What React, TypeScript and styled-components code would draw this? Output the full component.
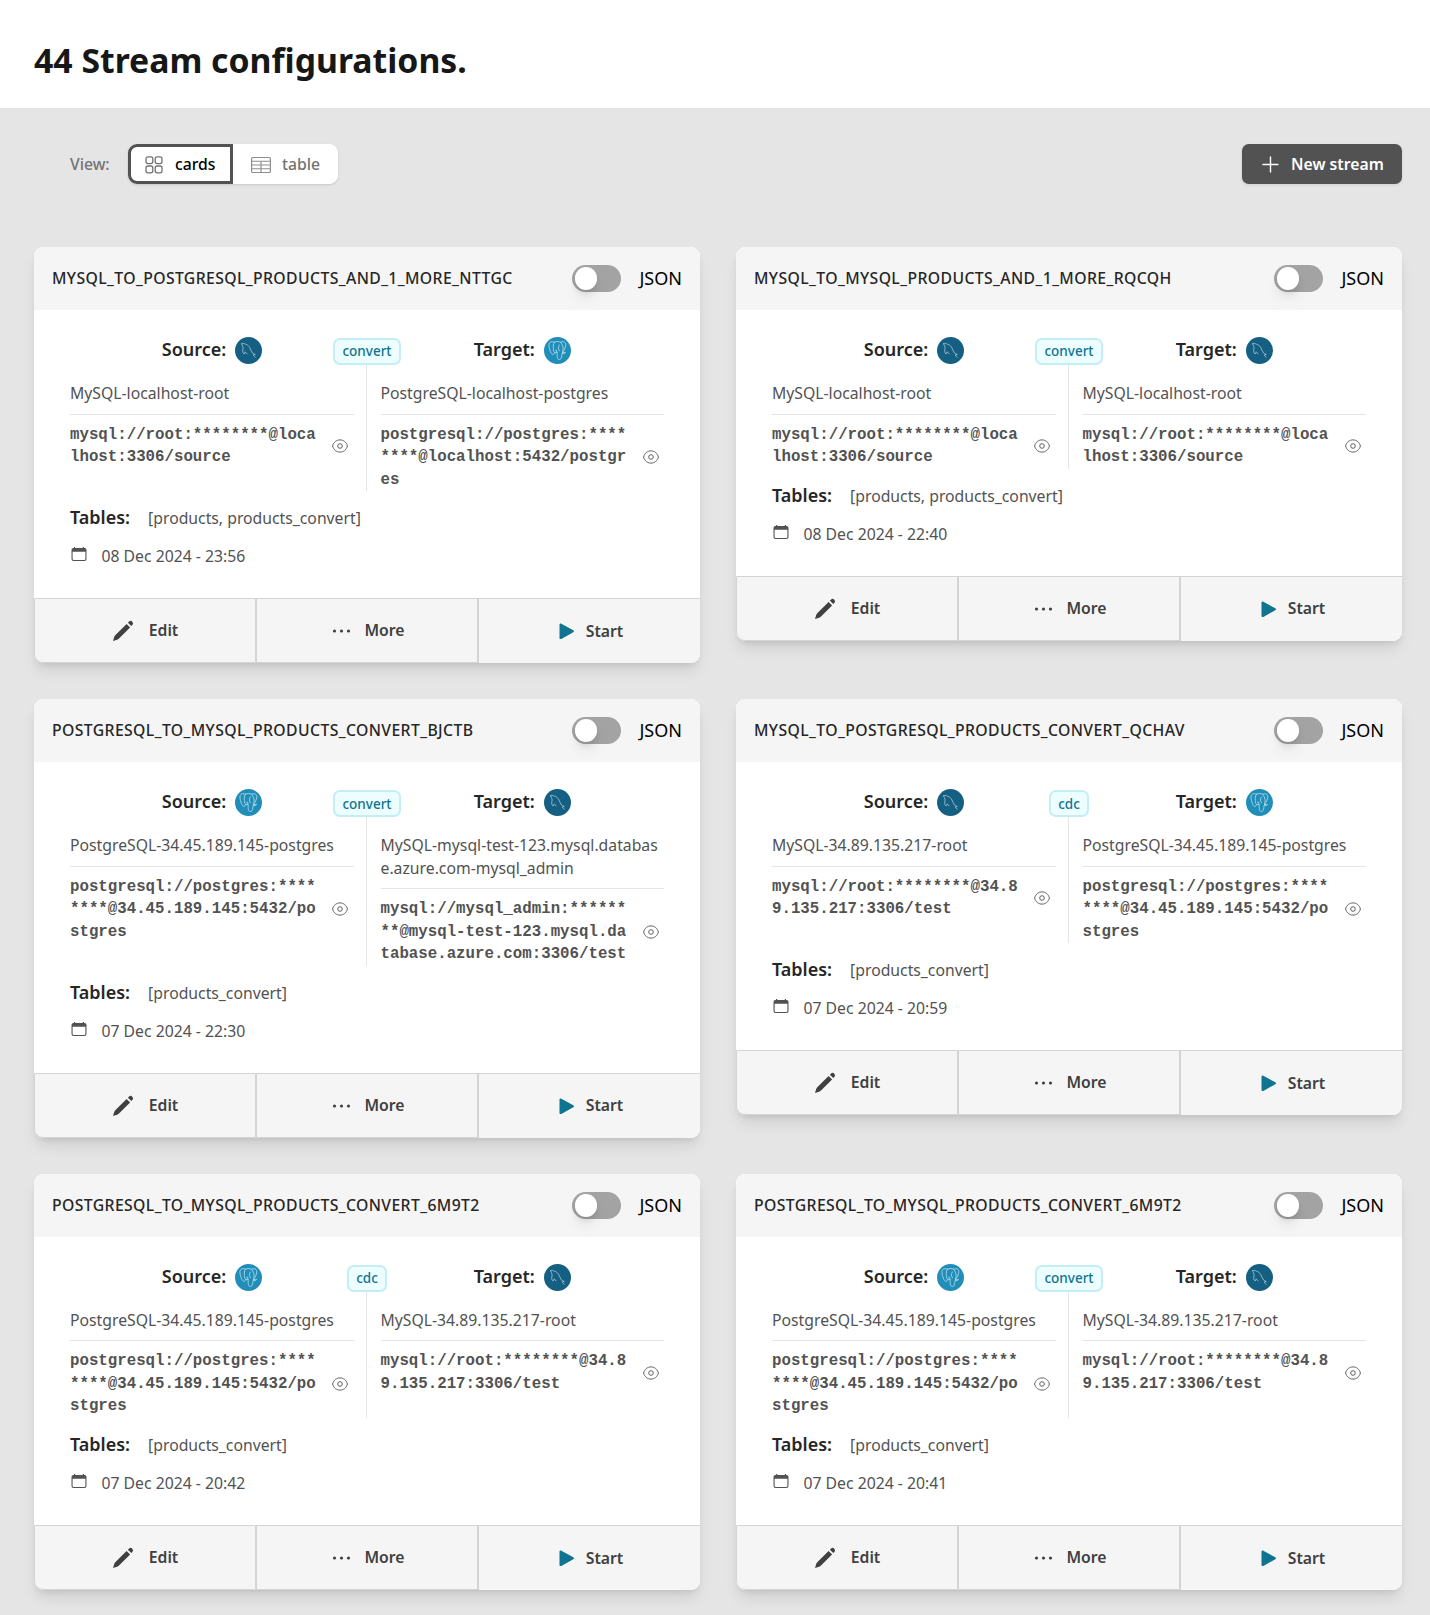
import React, { useState } from "react";
import styled, { createGlobalStyle, css } from "styled-components";

const Global = createGlobalStyle`
  *, *::before, *::after { box-sizing: border-box; }
  html { font-size: 18px; }
  body {
    margin: 0;
    background: #e5e5e5;
    color: #000;
    font-family: "Noto Sans", "Open Sans", sans-serif;
    line-height: 1.5;
  }
  button { font: inherit; color: inherit; cursor: pointer; margin: 0; }
  svg { display: block; flex: none; }
`;

const Page = styled.main`
  height: 1615px;
  overflow: hidden;
`;

const PageHeader = styled.header`
  display: flex;
  align-items: center;
  height: 108px;
  padding: 13px 34px 0;
  background: #fff;
`;

const Title = styled.h1`
  margin: 0;
  font-size: 33.75px;
  line-height: 40.5px;
  font-weight: 700;
  color: #171717;
`;

const Toolbar = styled.section`
  display: flex;
  align-items: center;
  justify-content: space-between;
  padding: 36px 28px 0 70px;
`;

const ViewPicker = styled.div`
  display: flex;
  align-items: center;
  gap: 18px;
  font-size: 15.75px;
  color: #737373;
`;

const ViewLabel = styled.span`
  width: 40px;
  padding-top: 2px;
  font-weight: 500;
`;

const Segments = styled.div`
  display: flex;
  height: 40px;
  border-radius: 9px;
  background: #fff;
  box-shadow: 0 1px 3px rgba(0, 0, 0, 0.1), 0 1px 2px -1px rgba(0, 0, 0, 0.1);
`;

const Segment = styled.button<{ $active?: boolean }>`
  display: flex;
  align-items: center;
  width: 105px;
  padding: 1px 0 0 ${(p) => (p.$active ? 11 : 13)}px;
  background: #fff;
  border: 3px solid ${(p) => (p.$active ? "#525252" : "#fff")};
  border-radius: 0 9px 9px 0;
  font-size: 15.75px;
  font-weight: 500;
  color: ${(p) => (p.$active ? "#000" : "#737373")};
  &:first-child { border-radius: 9px 0 0 9px; }
  svg { color: ${(p) => (p.$active ? "#737373" : "#8f8f8f")}; }
`;

const SegmentLabel = styled.span`
  margin-left: 9px;
`;

const PrimaryButton = styled.button`
  display: flex;
  align-items: center;
  gap: 9px;
  height: 40px;
  width: 160px;
  padding: 1px 0 0 17px;
  border: 0;
  border-radius: 6.75px;
  background: #525252;
  color: #fff;
  font-size: 15.75px;
  font-weight: 600;
  box-shadow: 0 1px 3px rgba(0, 0, 0, 0.1);
`;

const Grid = styled.section`
  display: grid;
  grid-template-columns: 1fr 1fr;
  align-items: start;
  gap: 36px;
  padding: 63px 28px 36px 34px;
`;

const CardBox = styled.article`
  border-radius: 9px;
  background: #fff;
  box-shadow: 0 10px 15px -3px rgba(0, 0, 0, 0.1), 0 4px 6px -3px rgba(0, 0, 0, 0.1);
`;

const CardHeader = styled.header`
  display: flex;
  align-items: center;
  justify-content: space-between;
  height: 63px;
  padding: 0 18px;
  border-radius: 9px 9px 0 0;
  background: #f5f5f5;
`;

const CardTitle = styled.h2`
  margin: 0;
  font-size: 15.75px;
  line-height: 22.5px;
  font-weight: 500;
  letter-spacing: 0.39px;
  color: #262626;
`;

const ToggleLabel = styled.label`
  display: flex;
  align-items: center;
  gap: 18px;
  font-size: 18px;
  line-height: 27px;
`;

const Track = styled.button<{ $on: boolean }>`
  display: flex;
  justify-content: ${(p) => (p.$on ? "flex-end" : "flex-start")};
  align-items: center;
  width: 49.5px;
  height: 27px;
  padding: 0 3px;
  border: 0;
  border-radius: 14px;
  background: ${(p) => (p.$on ? "#0e7490" : "#a3a3a3")};
`;

const Knob = styled.span`
  width: 22.5px;
  height: 22.5px;
  border-radius: 50%;
  background: #fff;
  box-shadow: 0 4px 6px -1px rgba(0, 0, 0, 0.1), 0 10px 15px -3px rgba(0, 0, 0, 0.1);
`;

const CardBody = styled.div`
  padding: 27px 36px 0;
`;

const Endpoints = styled.div`
  position: relative;
  display: grid;
  grid-template-columns: 1fr 1fr;
`;

const Endpoint = styled.section<{ $side: "left" | "right" }>`
  ${(p) =>
    p.$side === "left"
      ? css`padding-right: 12px; border-right: 1px solid #e5e5e5;`
      : css`padding-left: 13.5px;`}
`;

const EndpointHead = styled.h3`
  display: flex;
  align-items: center;
  justify-content: center;
  gap: 9px;
  height: 27px;
  margin: 0 0 18px;
  font-size: 18px;
  line-height: 27px;
  font-weight: 600;
  color: #262626;
`;

const EndpointLabel = styled.span`
  padding-bottom: 1.5px;
`;

const ModeSlot = styled.div`
  position: absolute;
  top: -1px;
  left: 0;
  right: 0;
  display: flex;
  justify-content: center;
  height: 29px;
`;

const ModeBacking = styled.div`
  padding-top: 2px;
  background: #fff;
`;

const ModeBadge = styled.span`
  display: flex;
  align-items: center;
  height: 27px;
  padding: 0 7px;
  border: 2px solid #c5eef4;
  border-radius: 6.75px;
  background: #ecfeff;
  font-size: 13.5px;
  font-weight: 500;
  color: #0e7490;
`;

const ConnectionName = styled.p`
  margin: 0 0 9px;
  padding-bottom: 9px;
  border-bottom: 1px solid #e5e5e5;
  font-size: 15.75px;
  line-height: 22.5px;
  color: #525252;
  word-break: break-all;
`;

const UrlRow = styled.div`
  display: flex;
  align-items: center;
`;

const Url = styled.code`
  width: 248px;
  font-family: "Liberation Mono", monospace;
  font-size: 15.75px;
  line-height: 22.5px;
  font-weight: 700;
  color: #525252;
  word-break: break-all;
`;

const RevealButton = styled.button`
  padding: 0;
  margin-left: 14px;
  border: 0;
  background: none;
  color: #606060;
`;

const TablesRow = styled.div`
  display: flex;
  align-items: baseline;
  gap: 18px;
  height: 27px;
  margin-top: 13.125px;
  font-size: 15.75px;
  line-height: 27px;
  color: #525252;
`;

const TablesLabel = styled.strong`
  font-size: 18px;
  font-weight: 600;
  color: #262626;
`;

const DateRow = styled.div`
  display: flex;
  gap: 13.5px;
  margin-top: 14px;
  height: 53px;
  font-size: 15.75px;
  line-height: 22.5px;
  color: #525252;
`;

const Actions = styled.footer`
  display: grid;
  grid-template-columns: repeat(3, 1fr);
`;

const Action = styled.button<{ $last?: boolean; $gap: number; $shift?: number }>`
  display: flex;
  align-items: center;
  justify-content: center;
  gap: ${(p) => p.$gap}px;
  height: 65px;
  padding: 1px 0 0 ${(p) => p.$shift ?? 0}px;
  border: solid #d4d4d4;
  border-width: ${(p) => (p.$last ? "1px 0 0 1px" : "1px")};
  background: #f5f5f5;
  font-size: 15.75px;
  font-weight: 600;
  color: #404040;
  &:first-child { border-bottom-left-radius: 9px; }
  &:last-child { border-bottom-right-radius: 9px; }
`;

type Db = "mysql" | "postgres";

const MySqlIcon = () => (
  <svg width="27" height="27" viewBox="0 0 27 27" fill="none">
    <circle cx="13.5" cy="13.5" r="13.5" fill="#156082" />
    <path
      d="M6.600 6.700c1.200-.9 2.400-.1 3.600.4 2 .3 3.500 1.700 4.700 3.800 1.100 1.900 1.500 3.800 2.500 5 .8.900 2 1 2.900 1.600-1.100.1-1.900.3-2.300.8.900.5 1.700 1 2.100 1.900M6.600 6.700c.2 1.400 1.300 2.200 1.500 3.700.1 1.800-.9 3.600-.1 5.300.3.800.8 1.200 1.200 1.200.5-.3.600-1.500 1-2.100.6.400 1.100 1.500 1.800 2.100"
      stroke="#b4d0dd"
      strokeWidth=".75"
      strokeLinecap="round"
      strokeLinejoin="round"
    />
  </svg>
);

const PostgresIcon = () => (
  <svg width="27" height="27" viewBox="0 0 27 27" fill="none">
    <circle cx="13.5" cy="13.5" r="13.5" fill="#218eb9" />
    <g stroke="#b9deec" strokeWidth=".8" strokeLinecap="round" strokeLinejoin="round">
      <path d="M10.500 5.200C7 3.800 4.500 5.200 5 9c.4 3.200 2 8 3.600 8.500 1 .2 1.700-1.300 2.500-2.200" />
      <path d="M10.500 5.200c-1.500 1.500-1.300 4-1.100 6.300.1 1.800-.1 3.200 1.500 4 .8.400 1.700.2 2-.3" />
      <path d="M10.500 5.200c2-1 4.500-.8 6 0 3.300-1.200 5.600.2 5.300 2.900-.3 2.600-1.600 5.400-3.300 7.400 1.400.4 2.300.2 3.100-.1-.7 1.100-2.400 1.500-3.600 1.100-.2 2.500-.2 5.700-2.500 6-2.400.3-2.300-2.700-2.400-7" />
      <path d="M16.500 5.200c2 2.200 3 5 2.500 7.600-.2 1-.8 1.800-.5 2.700M15.300 8c-1.200 2-1.200 4.300.2 5.800M11.500 13.200l1.300.2v2" />
    </g>
  </svg>
);

const DbIcon = ({ db }: { db: Db }) => (db === "mysql" ? <MySqlIcon /> : <PostgresIcon />);

const CardsIcon = () => (
  <svg width="24" height="24" viewBox="0 0 24 24" fill="none" stroke="currentColor" strokeWidth="1.3">
    <rect x="4" y="3.800" width="6.800" height="6.800" rx="2" />
    <rect x="13.200" y="3.800" width="6.800" height="6.800" rx="2" />
    <rect x="4" y="13" width="6.800" height="6.800" rx="2" />
    <rect x="13.200" y="13" width="6.800" height="6.800" rx="2" />
  </svg>
);

const TableIcon = () => (
  <svg width="24" height="24" viewBox="0 0 24 24" fill="none" stroke="currentColor" strokeWidth="1.2">
    <rect x="2.600" y="4.500" width="18.800" height="15" rx="1.300" />
    <path d="M2.600 8.250h18.800M2.600 12h18.800M2.600 15.750h18.800M12 8.250V19.500" />
  </svg>
);

const PlusIcon = () => (
  <svg width="23" height="23" viewBox="0 0 23 23" fill="none" stroke="currentColor" strokeWidth="1.400" strokeLinecap="round">
    <path d="M11.500 4v15M4 11.500h15" />
  </svg>
);

const EyeIcon = () => (
  <svg width="16" height="14" viewBox="0 0 16 14" fill="none" stroke="currentColor">
    <path d="M.6 7C1.500 3.200 4.500.900 8 .900S14.500 3.200 15.400 7C14.500 10.800 11.500 13.100 8 13.100S1.500 10.800.6 7Z" />
    <circle cx="8" cy="7" r="2.300" />
  </svg>
);

const CalendarIcon = () => (
  <svg width="18" height="18" viewBox="0 0 18 18" fill="currentColor">
    <path fillRule="evenodd" d="M4 2h1.200v.9h7.600V2H14v.9h.500A2 2 0 0 1 16.500 5v9a2 2 0 0 1-2 2h-11a2 2 0 0 1-2-2V5a2 2 0 0 1 2-2.100H4zM2.600 6.800v6.900a1.200 1.200 0 0 0 1.200 1.200h10.400a1.200 1.200 0 0 0 1.200-1.200V6.800z" />
  </svg>
);

const PencilIcon = () => (
  <svg width="22" height="22" viewBox="0 0 22 22" fill="currentColor">
    <path d="M16.900 1.700a2.300 2.300 0 0 1 3.400 3.400l-1 1-3.400-3.400zM14.600 3.900l3.500 3.500L7 18.500a5 5 0 0 1-2 1.300L1 21l1.200-4a5 5 0 0 1 1.300-2z" />
  </svg>
);

const DotsIcon = () => (
  <svg width="19" height="6" viewBox="0 0 19 6" fill="currentColor">
    <circle cx="2.500" cy="3" r="1.600" />
    <circle cx="9.500" cy="3" r="1.600" />
    <circle cx="16.500" cy="3" r="1.600" />
  </svg>
);

const PlayIcon = () => (
  <svg width="17" height="17" viewBox="0 0 17 17" fill="#0e7490">
    <path d="M1.500 1.700C1.500.7 2.400.2 3.300.7l12 6.600c.9.500.9 1.500 0 2l-12 6.600c-.9.500-1.800 0-1.800-1z" />
  </svg>
);

interface End {
  db: Db;
  name: string;
  url: string;
}

interface Stream {
  title: string;
  mode: string;
  source: End;
  target: End;
  tables: string;
  date: string;
}

const mysqlLocal: End = { db: "mysql", name: "MySQL-localhost-root", url: "mysql://root:********@localhost:3306/source" };
const pgLocal: End = { db: "postgres", name: "PostgreSQL-localhost-postgres", url: "postgresql://postgres:********@localhost:5432/postgres" };
const pgRemote: End = { db: "postgres", name: "PostgreSQL-34.45.189.145-postgres", url: "postgresql://postgres:********@34.45.189.145:5432/postgres" };
const mysqlRemote: End = { db: "mysql", name: "MySQL-34.89.135.217-root", url: "mysql://root:********@34.89.135.217:3306/test" };
const mysqlAzure: End = {
  db: "mysql",
  name: "MySQL-mysql-test-123.mysql.database.azure.com-mysql_admin",
  url: "mysql://mysql_admin:********@mysql-test-123.mysql.database.azure.com:3306/test",
};

const streams: Stream[] = [
  { title: "MYSQL_TO_POSTGRESQL_PRODUCTS_AND_1_MORE_NTTGC", mode: "convert", source: mysqlLocal, target: pgLocal, tables: "[products, products_convert]", date: "08 Dec 2024 - 23:56" },
  { title: "MYSQL_TO_MYSQL_PRODUCTS_AND_1_MORE_RQCQH", mode: "convert", source: mysqlLocal, target: mysqlLocal, tables: "[products, products_convert]", date: "08 Dec 2024 - 22:40" },
  { title: "POSTGRESQL_TO_MYSQL_PRODUCTS_CONVERT_BJCTB", mode: "convert", source: pgRemote, target: mysqlAzure, tables: "[products_convert]", date: "07 Dec 2024 - 22:30" },
  { title: "MYSQL_TO_POSTGRESQL_PRODUCTS_CONVERT_QCHAV", mode: "cdc", source: mysqlRemote, target: pgRemote, tables: "[products_convert]", date: "07 Dec 2024 - 20:59" },
  { title: "POSTGRESQL_TO_MYSQL_PRODUCTS_CONVERT_6M9T2", mode: "cdc", source: pgRemote, target: mysqlRemote, tables: "[products_convert]", date: "07 Dec 2024 - 20:42" },
  { title: "POSTGRESQL_TO_MYSQL_PRODUCTS_CONVERT_6M9T2", mode: "convert", source: pgRemote, target: mysqlRemote, tables: "[products_convert]", date: "07 Dec 2024 - 20:41" },
];

const EndpointPanel = ({ side, label, end }: { side: "left" | "right"; label: string; end: End }) => (
  <Endpoint $side={side}>
    <EndpointHead>
      <EndpointLabel>{label}</EndpointLabel>
      <DbIcon db={end.db} />
    </EndpointHead>
    <ConnectionName>{end.name}</ConnectionName>
    <UrlRow>
      <Url>{end.url}</Url>
      <RevealButton aria-label="Show password">
        <EyeIcon />
      </RevealButton>
    </UrlRow>
  </Endpoint>
);

const StreamCard = ({ stream }: { stream: Stream }) => {
  const [json, setJson] = useState(false);
  return (
    <CardBox>
      <CardHeader>
        <CardTitle>{stream.title}</CardTitle>
        <ToggleLabel>
          <Track $on={json} onClick={() => setJson(!json)} aria-label="JSON">
            <Knob />
          </Track>
          JSON
        </ToggleLabel>
      </CardHeader>
      <CardBody>
        <Endpoints>
          <EndpointPanel side="left" label="Source:" end={stream.source} />
          <EndpointPanel side="right" label="Target:" end={stream.target} />
          <ModeSlot>
            <ModeBacking>
              <ModeBadge>{stream.mode}</ModeBadge>
            </ModeBacking>
          </ModeSlot>
        </Endpoints>
        <TablesRow>
          <TablesLabel>Tables:</TablesLabel>
          {stream.tables}
        </TablesRow>
        <DateRow>
          <CalendarIcon />
          {stream.date}
        </DateRow>
      </CardBody>
      <Actions>
        <Action $gap={15}><PencilIcon />Edit</Action>
        <Action $gap={13} $shift={3}><DotsIcon />More</Action>
        <Action $last $gap={11} $shift={2}><PlayIcon />Start</Action>
      </Actions>
    </CardBox>
  );
};

export default function App() {
  const [view, setView] = useState("cards");
  return (
    <Page>
      <Global />
      <PageHeader>
        <Title>44 Stream configurations.</Title>
      </PageHeader>
      <Toolbar>
        <ViewPicker>
          <ViewLabel>View:</ViewLabel>
          <Segments>
            <Segment $active={view === "cards"} onClick={() => setView("cards")}>
              <CardsIcon />
              <SegmentLabel>cards</SegmentLabel>
            </Segment>
            <Segment $active={view === "table"} onClick={() => setView("table")}>
              <TableIcon />
              <SegmentLabel>table</SegmentLabel>
            </Segment>
          </Segments>
        </ViewPicker>
        <PrimaryButton>
          <PlusIcon />
          New stream
        </PrimaryButton>
      </Toolbar>
      <Grid>
        {streams.map((s, i) => (
          <StreamCard key={i} stream={s} />
        ))}
      </Grid>
    </Page>
  );
}
